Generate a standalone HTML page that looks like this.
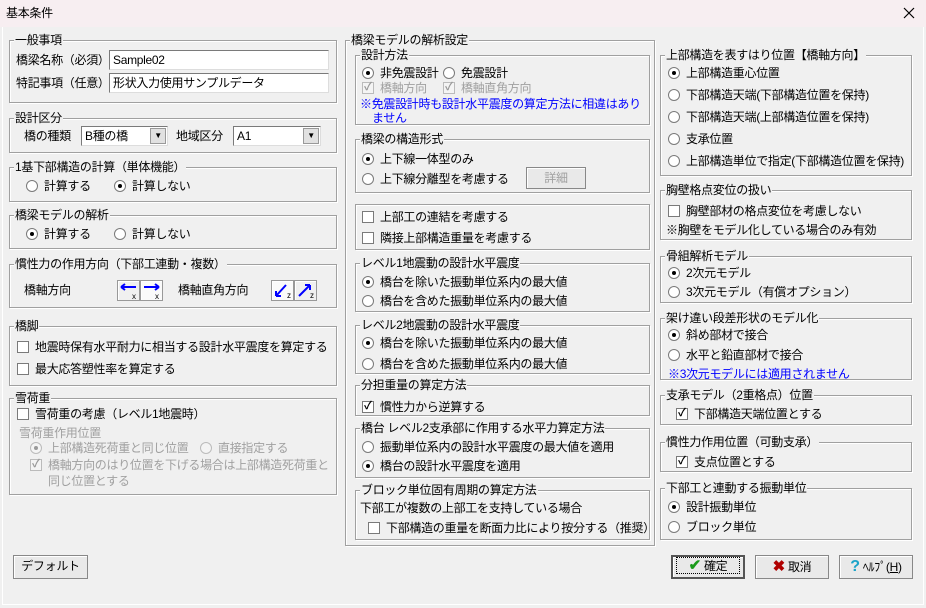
<!DOCTYPE html>
<html><head><meta charset="utf-8"><style>
*{box-sizing:border-box;margin:0;padding:0}
body{width:926px;height:608px;background:#f0f0f0;font-family:"Liberation Sans","Noto Sans CJK JP","IPAGothic",sans-serif;font-size:12px;color:#000;position:relative;overflow:hidden;letter-spacing:-0.3px}
.a{position:absolute;white-space:nowrap;line-height:14px}
.g{position:absolute;border:1px solid #a0a0a0;box-shadow:inset 1px 1px #fff,1px 1px #fff}
.g>.l{position:absolute;left:4px;top:-8px;background:#f0f0f0;padding:0 1px;line-height:14px;white-space:nowrap}
.r,.c{display:inline-block;width:12px;height:12px;background:#fff;border:1px solid #7a7a7a;vertical-align:-2px;margin-right:6px;position:relative}
.r{border-radius:50%}
.r.on::after{content:"";position:absolute;left:3px;top:3px;width:4px;height:4px;border-radius:50%;background:#000}
.c.on::after{content:"✓";position:absolute;left:1px;top:-3px;font-size:11px;font-weight:bold}
.dis{color:#a0a0a0}
.dis .r,.dis .c{border-color:#bbb;background:#f4f4f4}
.dis .r.on::after{background:#999}
.dis .c.on::after{color:#999}
.in{position:absolute;background:#fff;border:1px solid #7a7a7a;border-right-color:#ddd;border-bottom-color:#ddd;padding-left:3px;line-height:18px}
.btn{position:absolute;border:1px solid #888;background:#e9e9e9;box-shadow:inset 1px 1px #fff;text-align:center;line-height:21px}
.dd{position:absolute;right:1px;top:1px;width:16px;height:16px;background:#e1e1e1;border:1px solid #999;font-size:8px;text-align:center;line-height:14px}
.blue{color:#0000ff}
.ib{position:absolute;width:23px;height:21px;border:1px solid #999;background:#f0f0f0;box-shadow:inset 1px 1px #fff}
</style></head><body>
<div style="position:absolute;left:0;top:0;width:926px;height:27px;background:#f7eef1"></div>
<div class="a" style="left:6px;top:6px">基本条件</div>
<svg style="position:absolute;left:903px;top:7px" width="12" height="12"><path d="M1 1L11 11M11 1L1 11" stroke="#000" stroke-width="1.2"/></svg>
<div style="position:absolute;left:2px;top:27px;width:922px;height:578px;border:1px solid #fff;border-top:none"></div>

<!-- left column -->
<div class="g" style="left:9px;top:40px;width:328px;height:63px"><span class="l">一般事項</span></div>
<div class="a" style="left:16px;top:53px">橋梁名称（必須）</div>
<div class="in" style="left:109px;top:50px;width:220px;height:20px">Sample02</div>
<div class="a" style="left:16px;top:76px">特記事項（任意）</div>
<div class="in" style="left:109px;top:73px;width:220px;height:20px">形状入力使用サンプルデータ</div>

<div class="g" style="left:9px;top:118px;width:328px;height:35px"><span class="l">設計区分</span></div>
<div class="a" style="left:24px;top:129px">橋の種類</div>
<div class="in" style="left:81px;top:126px;width:87px;height:20px">B種の橋<span class="dd">▼</span></div>
<div class="a" style="left:176px;top:129px">地域区分</div>
<div class="in" style="left:233px;top:126px;width:88px;height:20px">A1<span class="dd">▼</span></div>

<div class="g" style="left:9px;top:167px;width:328px;height:35px"><span class="l">1基下部構造の計算（単体機能）</span></div>
<div class="a" style="left:26px;top:179px"><span class="r"></span>計算する</div>
<div class="a" style="left:114px;top:179px"><span class="r on"></span>計算しない</div>

<div class="g" style="left:9px;top:215px;width:328px;height:34px"><span class="l">橋梁モデルの解析</span></div>
<div class="a" style="left:26px;top:227px"><span class="r on"></span>計算する</div>
<div class="a" style="left:114px;top:227px"><span class="r"></span>計算しない</div>

<div class="g" style="left:9px;top:264px;width:328px;height:44px"><span class="l">慣性力の作用方向（下部工連動・複数）</span></div>
<div class="a" style="left:24px;top:283px">橋軸方向</div>
<div class="ib" style="left:117px;top:280px"><svg width="21" height="19"><path d="M3 6h15M3 6l4-3M3 6l4 3" stroke="#0000ff" stroke-width="2" fill="none"/><text x="14" y="18" font-size="8">x</text></svg></div>
<div class="ib" style="left:140px;top:280px;background:#fafafa"><svg width="21" height="19"><path d="M3 6h15M18 6l-4-3M18 6l-4 3" stroke="#0000ff" stroke-width="2" fill="none"/><text x="14" y="18" font-size="8">x</text></svg></div>
<div class="a" style="left:178px;top:283px">橋軸直角方向</div>
<div class="ib" style="left:271px;top:280px;background:#fafafa"><svg width="21" height="19"><path d="M14 4L4 15M4 15h5M4 15v-5" stroke="#0000ff" stroke-width="2" fill="none"/><text x="15" y="17" font-size="8">z</text></svg></div>
<div class="ib" style="left:294px;top:280px"><svg width="21" height="19"><path d="M4 15L15 4M15 4h-5M15 4v5" stroke="#0000ff" stroke-width="2" fill="none"/><text x="15" y="17" font-size="8">z</text></svg></div>

<div class="g" style="left:9px;top:326px;width:328px;height:60px"><span class="l">橋脚</span></div>
<div class="a" style="left:17px;top:340px"><span class="c"></span>地震時保有水平耐力に相当する設計水平震度を算定する</div>
<div class="a" style="left:17px;top:362px"><span class="c"></span>最大応答塑性率を算定する</div>

<div class="g" style="left:9px;top:398px;width:328px;height:97px"><span class="l">雪荷重</span></div>
<div class="a" style="left:17px;top:407px"><span class="c"></span>雪荷重の考慮（レベル1地震時）</div>
<div class="a dis" style="left:19px;top:426px">雪荷重作用位置</div>
<div class="a dis" style="left:30px;top:441px"><span class="r on"></span>上部構造死荷重と同じ位置</div>
<div class="a dis" style="left:200px;top:441px"><span class="r"></span>直接指定する</div>
<div class="a dis" style="left:30px;top:458px"><span class="c on"></span>橋軸方向のはり位置を下げる場合は上部構造死荷重と</div>
<div class="a dis" style="left:48px;top:474px">同じ位置とする</div>

<div class="btn" style="left:13px;top:555px;width:75px;height:24px">デフォルト</div>

<!-- middle -->
<div class="g" style="left:345px;top:40px;width:310px;height:506px"><span class="l">橋梁モデルの解析設定</span></div>
<div class="g" style="left:355px;top:55px;width:295px;height:70px"><span class="l">設計方法</span></div>
<div class="a" style="left:362px;top:66px"><span class="r on"></span>非免震設計</div>
<div class="a" style="left:443px;top:66px"><span class="r"></span>免震設計</div>
<div class="a dis" style="left:362px;top:81px"><span class="c on"></span>橋軸方向</div>
<div class="a dis" style="left:443px;top:81px"><span class="c on"></span>橋軸直角方向</div>
<div class="a blue" style="left:360px;top:97px">※免震設計時も設計水平震度の算定方法に相違はあり</div>
<div class="a blue" style="left:372px;top:111px">ません</div>

<div class="g" style="left:355px;top:139px;width:295px;height:54px"><span class="l">橋梁の構造形式</span></div>
<div class="a" style="left:362px;top:152px"><span class="r on"></span>上下線一体型のみ</div>
<div class="a" style="left:362px;top:172px"><span class="r"></span>上下線分離型を考慮する</div>
<div class="btn dis" style="left:526px;top:167px;width:60px;height:22px;color:#a0a0a0">詳細</div>

<div class="g" style="left:355px;top:204px;width:295px;height:46px"></div>
<div class="a" style="left:362px;top:210px"><span class="c"></span>上部工の連結を考慮する</div>
<div class="a" style="left:362px;top:231px"><span class="c"></span>隣接上部構造重量を考慮する</div>

<div class="g" style="left:355px;top:263px;width:295px;height:49px"><span class="l">レベル1地震動の設計水平震度</span></div>
<div class="a" style="left:362px;top:275px"><span class="r on"></span>橋台を除いた振動単位系内の最大値</div>
<div class="a" style="left:362px;top:294px"><span class="r"></span>橋台を含めた振動単位系内の最大値</div>

<div class="g" style="left:355px;top:325px;width:295px;height:49px"><span class="l">レベル2地震動の設計水平震度</span></div>
<div class="a" style="left:362px;top:336px"><span class="r on"></span>橋台を除いた振動単位系内の最大値</div>
<div class="a" style="left:362px;top:357px"><span class="r"></span>橋台を含めた振動単位系内の最大値</div>

<div class="g" style="left:355px;top:385px;width:295px;height:31px"><span class="l">分担重量の算定方法</span></div>
<div class="a" style="left:362px;top:400px"><span class="c on"></span>慣性力から逆算する</div>

<div class="g" style="left:355px;top:428px;width:295px;height:50px"><span class="l">橋台 レベル2支承部に作用する水平力算定方法</span></div>
<div class="a" style="left:362px;top:440px"><span class="r"></span>振動単位系内の設計水平震度の最大値を適用</div>
<div class="a" style="left:362px;top:459px"><span class="r on"></span>橋台の設計水平震度を適用</div>

<div class="g" style="left:355px;top:490px;width:295px;height:50px"><span class="l">ブロック単位固有周期の算定方法</span></div>
<div class="a" style="left:360px;top:501px">下部工が複数の上部工を支持している場合</div>
<div class="a" style="left:368px;top:521px"><span class="c"></span>下部構造の重量を断面力比により按分する（推奨）</div>

<!-- right -->
<div class="g" style="left:660px;top:55px;width:252px;height:121px"><span class="l">上部構造を表すはり位置【橋軸方向】</span></div>
<div class="a" style="left:668px;top:66px"><span class="r on"></span>上部構造重心位置</div>
<div class="a" style="left:668px;top:88px"><span class="r"></span>下部構造天端(下部構造位置を保持)</div>
<div class="a" style="left:668px;top:110px"><span class="r"></span>下部構造天端(上部構造位置を保持)</div>
<div class="a" style="left:668px;top:132px"><span class="r"></span>支承位置</div>
<div class="a" style="left:668px;top:154px"><span class="r"></span>上部構造単位で指定(下部構造位置を保持)</div>

<div class="g" style="left:660px;top:190px;width:252px;height:50px"><span class="l">胸壁格点変位の扱い</span></div>
<div class="a" style="left:668px;top:204px"><span class="c"></span>胸壁部材の格点変位を考慮しない</div>
<div class="a" style="left:666px;top:223px">※胸壁をモデル化している場合のみ有効</div>

<div class="g" style="left:660px;top:256px;width:252px;height:47px"><span class="l">骨組解析モデル</span></div>
<div class="a" style="left:668px;top:266px"><span class="r on"></span>2次元モデル</div>
<div class="a" style="left:668px;top:285px"><span class="r"></span>3次元モデル（有償オプション）</div>

<div class="g" style="left:660px;top:318px;width:252px;height:62px"><span class="l">架け違い段差形状のモデル化</span></div>
<div class="a" style="left:668px;top:328px"><span class="r on"></span>斜め部材で接合</div>
<div class="a" style="left:668px;top:348px"><span class="r"></span>水平と鉛直部材で接合</div>
<div class="a blue" style="left:668px;top:367px">※3次元モデルには適用されません</div>

<div class="g" style="left:660px;top:395px;width:252px;height:30px"><span class="l">支承モデル（2重格点）位置</span></div>
<div class="a" style="left:676px;top:407px"><span class="c on"></span>下部構造天端位置とする</div>

<div class="g" style="left:660px;top:442px;width:252px;height:30px"><span class="l">慣性力作用位置（可動支承）</span></div>
<div class="a" style="left:676px;top:455px"><span class="c on"></span>支点位置とする</div>

<div class="g" style="left:660px;top:488px;width:252px;height:52px"><span class="l">下部工と連動する振動単位</span></div>
<div class="a" style="left:668px;top:500px"><span class="r on"></span>設計振動単位</div>
<div class="a" style="left:668px;top:520px"><span class="r"></span>ブロック単位</div>

<div class="btn" style="left:671px;top:555px;width:74px;height:24px;border:2px solid #555;line-height:19px"><span style="display:inline-block;border:1px dotted #000;width:64px;height:17px;line-height:15px"><span style="color:#1a9a1a;font-weight:bold;font-size:15px">✔</span> 確定</span></div>
<div class="btn" style="left:755px;top:555px;width:74px;height:24px"><span style="color:#b00000;font-weight:bold;font-size:15px">✖</span> 取消</div>
<div class="btn" style="left:839px;top:555px;width:74px;height:24px"><span style="color:#1aa3c8;font-weight:bold;font-size:16px">?</span> ﾍﾙﾌﾟ(<u>H</u>)</div>
</body></html>
